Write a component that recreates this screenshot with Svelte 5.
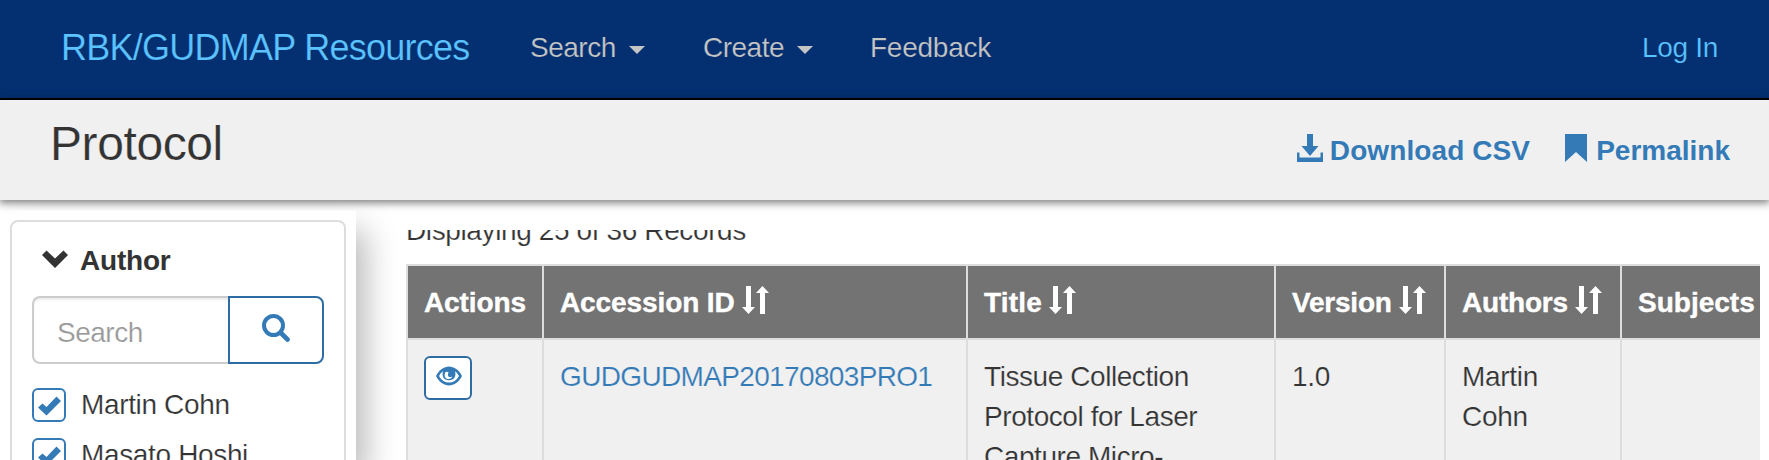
<script>
  const columns = [
    { name: 'Actions', width: 136, spacing: -0.1, sort: false },
    { name: 'Accession ID', width: 424, spacing: -0.1, sort: true },
    { name: 'Title', width: 308, spacing: 0.2, sort: true },
    { name: 'Version', width: 170, spacing: -0.2, sort: true },
    { name: 'Authors', width: 176, spacing: -0.2, sort: true },
    { name: 'Subjects', width: 176, spacing: 0, sort: true }
  ];
  const authors = ['Martin Cohn', 'Masato Hoshi'];
</script>

<div class="page">
  <nav>
    <a class="brand">RBK/GUDMAP Resources</a>
    <a class="item search">Search <i class="caret"></i></a>
    <a class="item create">Create <i class="caret"></i></a>
    <a class="item feedback">Feedback</a>
    <a class="item login">Log In</a>
  </nav>

  <header>
    <h1>Protocol</h1>
    <a class="tool csv">
      <svg width="26" height="28" viewBox="0 0 26 28"><path d="M10 0h6v12h5.500L13 22 4.500 12H10zM0 18.500h2.500v5h21v-5H26V28H0z" /></svg>
      <span>Download CSV</span>
    </a>
    <a class="tool link">
      <svg width="22" height="28" viewBox="0 0 22 28"><path d="M0 0h22v28L11 18 0 28z" /></svg>
      <span>Permalink</span>
    </a>
  </header>

  <main>
    <aside>
      <section class="facet">
        <h2>
          <svg width="26" height="18" viewBox="0 0 26 18"><path d="M4.500 0.500 13 8.500l8.500-8L26 5 13 18 0 5z" /></svg>
          <span>Author</span>
        </h2>
        <div class="group">
          <div class="field">Search</div>
          <div class="go">
            <svg width="28" height="28" viewBox="0 0 28 28"><circle cx="11.500" cy="11.500" r="9.500" fill="none" stroke="currentColor" stroke-width="4" /><path d="m19 19 6.500 6.500" fill="none" stroke="currentColor" stroke-width="4.600" stroke-linecap="round" /></svg>
          </div>
        </div>
        {#each authors as author}
          <div class="choice">
            <span class="box"><svg width="24" height="20" viewBox="0 0 24 20"><path d="M0 11.500 4.500 7.500l4 3.500L18.500 0.500 23 5 8.500 19.500z" /></svg></span>
            <span class="label">{author}</span>
          </div>
        {/each}
      </section>
    </aside>

    <div class="results">
      <div class="count">Displaying 25 of 36 Records</div>
      <div class="row head">
        {#each columns as col}
          <div class="cell" style:width="{col.width}px">
            <span style:letter-spacing="{col.spacing}px">{col.name}</span>
            {#if col.sort}
              <svg width="27" height="28" viewBox="0 0 27 28"><path d="M4 0h5v21h4L6.500 28 0 21h4zM20.500 0 27 7h-4v21h-5V7h-4z" /></svg>
            {/if}
          </div>
        {/each}
      </div>
      <div class="row body">
        <div class="cell" style:width="{columns[0].width}px">
          <span class="view">
            <svg width="26" height="20" viewBox="0 0 26 20"><path d="M0 10C3 4 8 .5 13 .5S23 4 26 10C23 16 18 19.500 13 19.500S3 16 0 10z" /><path class="hollow" d="M3 10c1-2 2.400-3.600 4-4.800C5.600 10 7.600 14.200 13 14.200S20.400 10 19 5.200c1.600 1.200 3 2.800 4 4.800-2.500 4.400-6 6.600-10 6.600S5.500 14.400 3 10z" /><path class="hollow" d="M9.400 6.200C7.600 9.600 9.200 13 12.600 13c2 0 3.400-1.200 3.700-2.800-1.800 1.500-4 1-4.300-1-.2-1.200.1-2.200.7-3-1.200-.7-2.600-.8-3.300 0z" /></svg>
          </span>
        </div>
        <div class="cell" style:width="{columns[1].width}px"><a class="id">GUDGUDMAP20170803PRO1</a></div>
        <div class="cell title" style:width="{columns[2].width}px">Tissue Collection<br />Protocol for Laser<br />Capture Micro-</div>
        <div class="cell version" style:width="{columns[3].width}px">1.0</div>
        <div class="cell author" style:width="{columns[4].width}px">Martin<br />Cohn</div>
        <div class="cell" style:width="{columns[5].width}px"></div>
      </div>
    </div>
  </main>
</div>

<style>
  :global(body) { background: #fff; overflow: hidden; }
  * { box-sizing: border-box; }
  .page {
    display: flex; flex-direction: column; width: 1769px; height: 460px; overflow: hidden;
    font: 28px/40px "Liberation Sans", Arial, sans-serif; color: #333; white-space: nowrap;
    -webkit-text-stroke: 0.2px #fff;
  }
  svg { display: block; flex: none; fill: currentColor; }
  nav {
    flex: none; display: flex; align-items: center; height: 100px; padding: 0 51px 2px 61px;
    background: #042f71; border-bottom: 2px solid #000; color: #c5c5c5;
    -webkit-text-stroke-color: #042f71;
  }
  .brand { width: 469px; font-size: 36px; letter-spacing: -0.75px; color: #5bc3ff; }
  .item { display: flex; align-items: center; letter-spacing: -0.5px; }
  .search { width: 173px; }
  .create { width: 167px; }
  .feedback { letter-spacing: -0.25px; }
  .login { margin-left: auto; letter-spacing: -0.3px; color: #5bc3ff; }
  .caret { margin: 3px 0 0 13px; border: 8px solid transparent; border-top-color: currentColor; border-bottom: 0; }

  header {
    position: relative; z-index: 2; flex: none; display: flex; height: 100px; padding: 0 39px 0 50px;
    background: #f0f0f0; box-shadow: 0 2px 8px 1px rgba(0, 0, 0, 0.5);
    -webkit-text-stroke-color: #f0f0f0;
  }
  h1 { margin: 18px auto 0 0; font-size: 48px; line-height: 52px; font-weight: 400; letter-spacing: -0.4px; }
  .tool { display: flex; height: 28px; margin-top: 34px; font-weight: 700; line-height: 33px; color: #337ab7; -webkit-text-stroke: 0; }
  .csv span { margin-left: 7px; letter-spacing: 0.1px; }
  .link { margin-left: 35px; }
  .link span { margin-left: 9px; }

  main { flex: 1; min-height: 0; display: flex; }
  aside { flex: none; width: 356px; margin-top: 10px; padding: 10px 10px 0; background: #fff; box-shadow: 10px 20px 30px rgba(0, 0, 0, 0.27); }
  .facet { height: 500px; padding: 28px 20px 0; border: 2px solid #ddd; border-radius: 8px; }
  h2 { display: flex; align-items: flex-start; gap: 12px; height: 24px; margin: 0 0 22px; padding-left: 10px; font-size: 28px; -webkit-text-stroke: 0; }
  h2 span { margin-top: -9px; letter-spacing: -0.2px; }
  .group { display: flex; height: 68px; margin-bottom: 24px; }
  .field { width: 196px; padding: 15px 23px; border: 2px solid #ccc; border-right: 0; border-radius: 8px 0 0 8px; box-shadow: inset 0 2px 2px rgba(0, 0, 0, 0.075); color: #999; letter-spacing: -0.5px; }
  .go { flex: none; width: 96px; padding: 16px 0 0 32px; border: 2px solid #2e6da4; border-radius: 0 8px 8px 0; color: #337ab7; }
  .choice { display: flex; height: 34px; margin-bottom: 16px; }
  .box { width: 34px; height: 34px; padding: 6px 0 0 4px; border: 2px solid #337ab7; border-radius: 6px; color: #337ab7; }
  .label { margin: -3px 0 0 15px; letter-spacing: -0.35px; }

  .results { width: 1354px; height: 230px; margin: 30px 0 0 50px; overflow: hidden; }
  .count { height: 34px; line-height: 2px; letter-spacing: -0.38px; }
  .row { display: flex; width: 1400px; border-left: 2px solid #ddd; border-top: 2px solid #ddd; }
  .cell { flex: none; padding: 17px 16px 16px; border-right: 2px solid #ddd; }
  .head { height: 74px; background: #737373; color: #fff; font-weight: 700; -webkit-text-stroke: 0.4px #fff; }
  .head .cell { display: flex; gap: 7px; }
  .head svg { margin-top: 3px; }
  .body { height: 200px; background: #f0f0f0; -webkit-text-stroke-color: #f0f0f0; }
  .view { display: block; width: 48px; height: 44px; margin-top: -1px; padding: 8px 0 0 10px; background: #fff; border: 2px solid #2e6da4; border-radius: 6px; color: #337ab7; }
  .hollow { fill: #fff; }
  .id { color: #337ab7; letter-spacing: -0.65px; }
  .title { letter-spacing: -0.43px; }
  .version, .author { letter-spacing: -0.3px; }
</style>
